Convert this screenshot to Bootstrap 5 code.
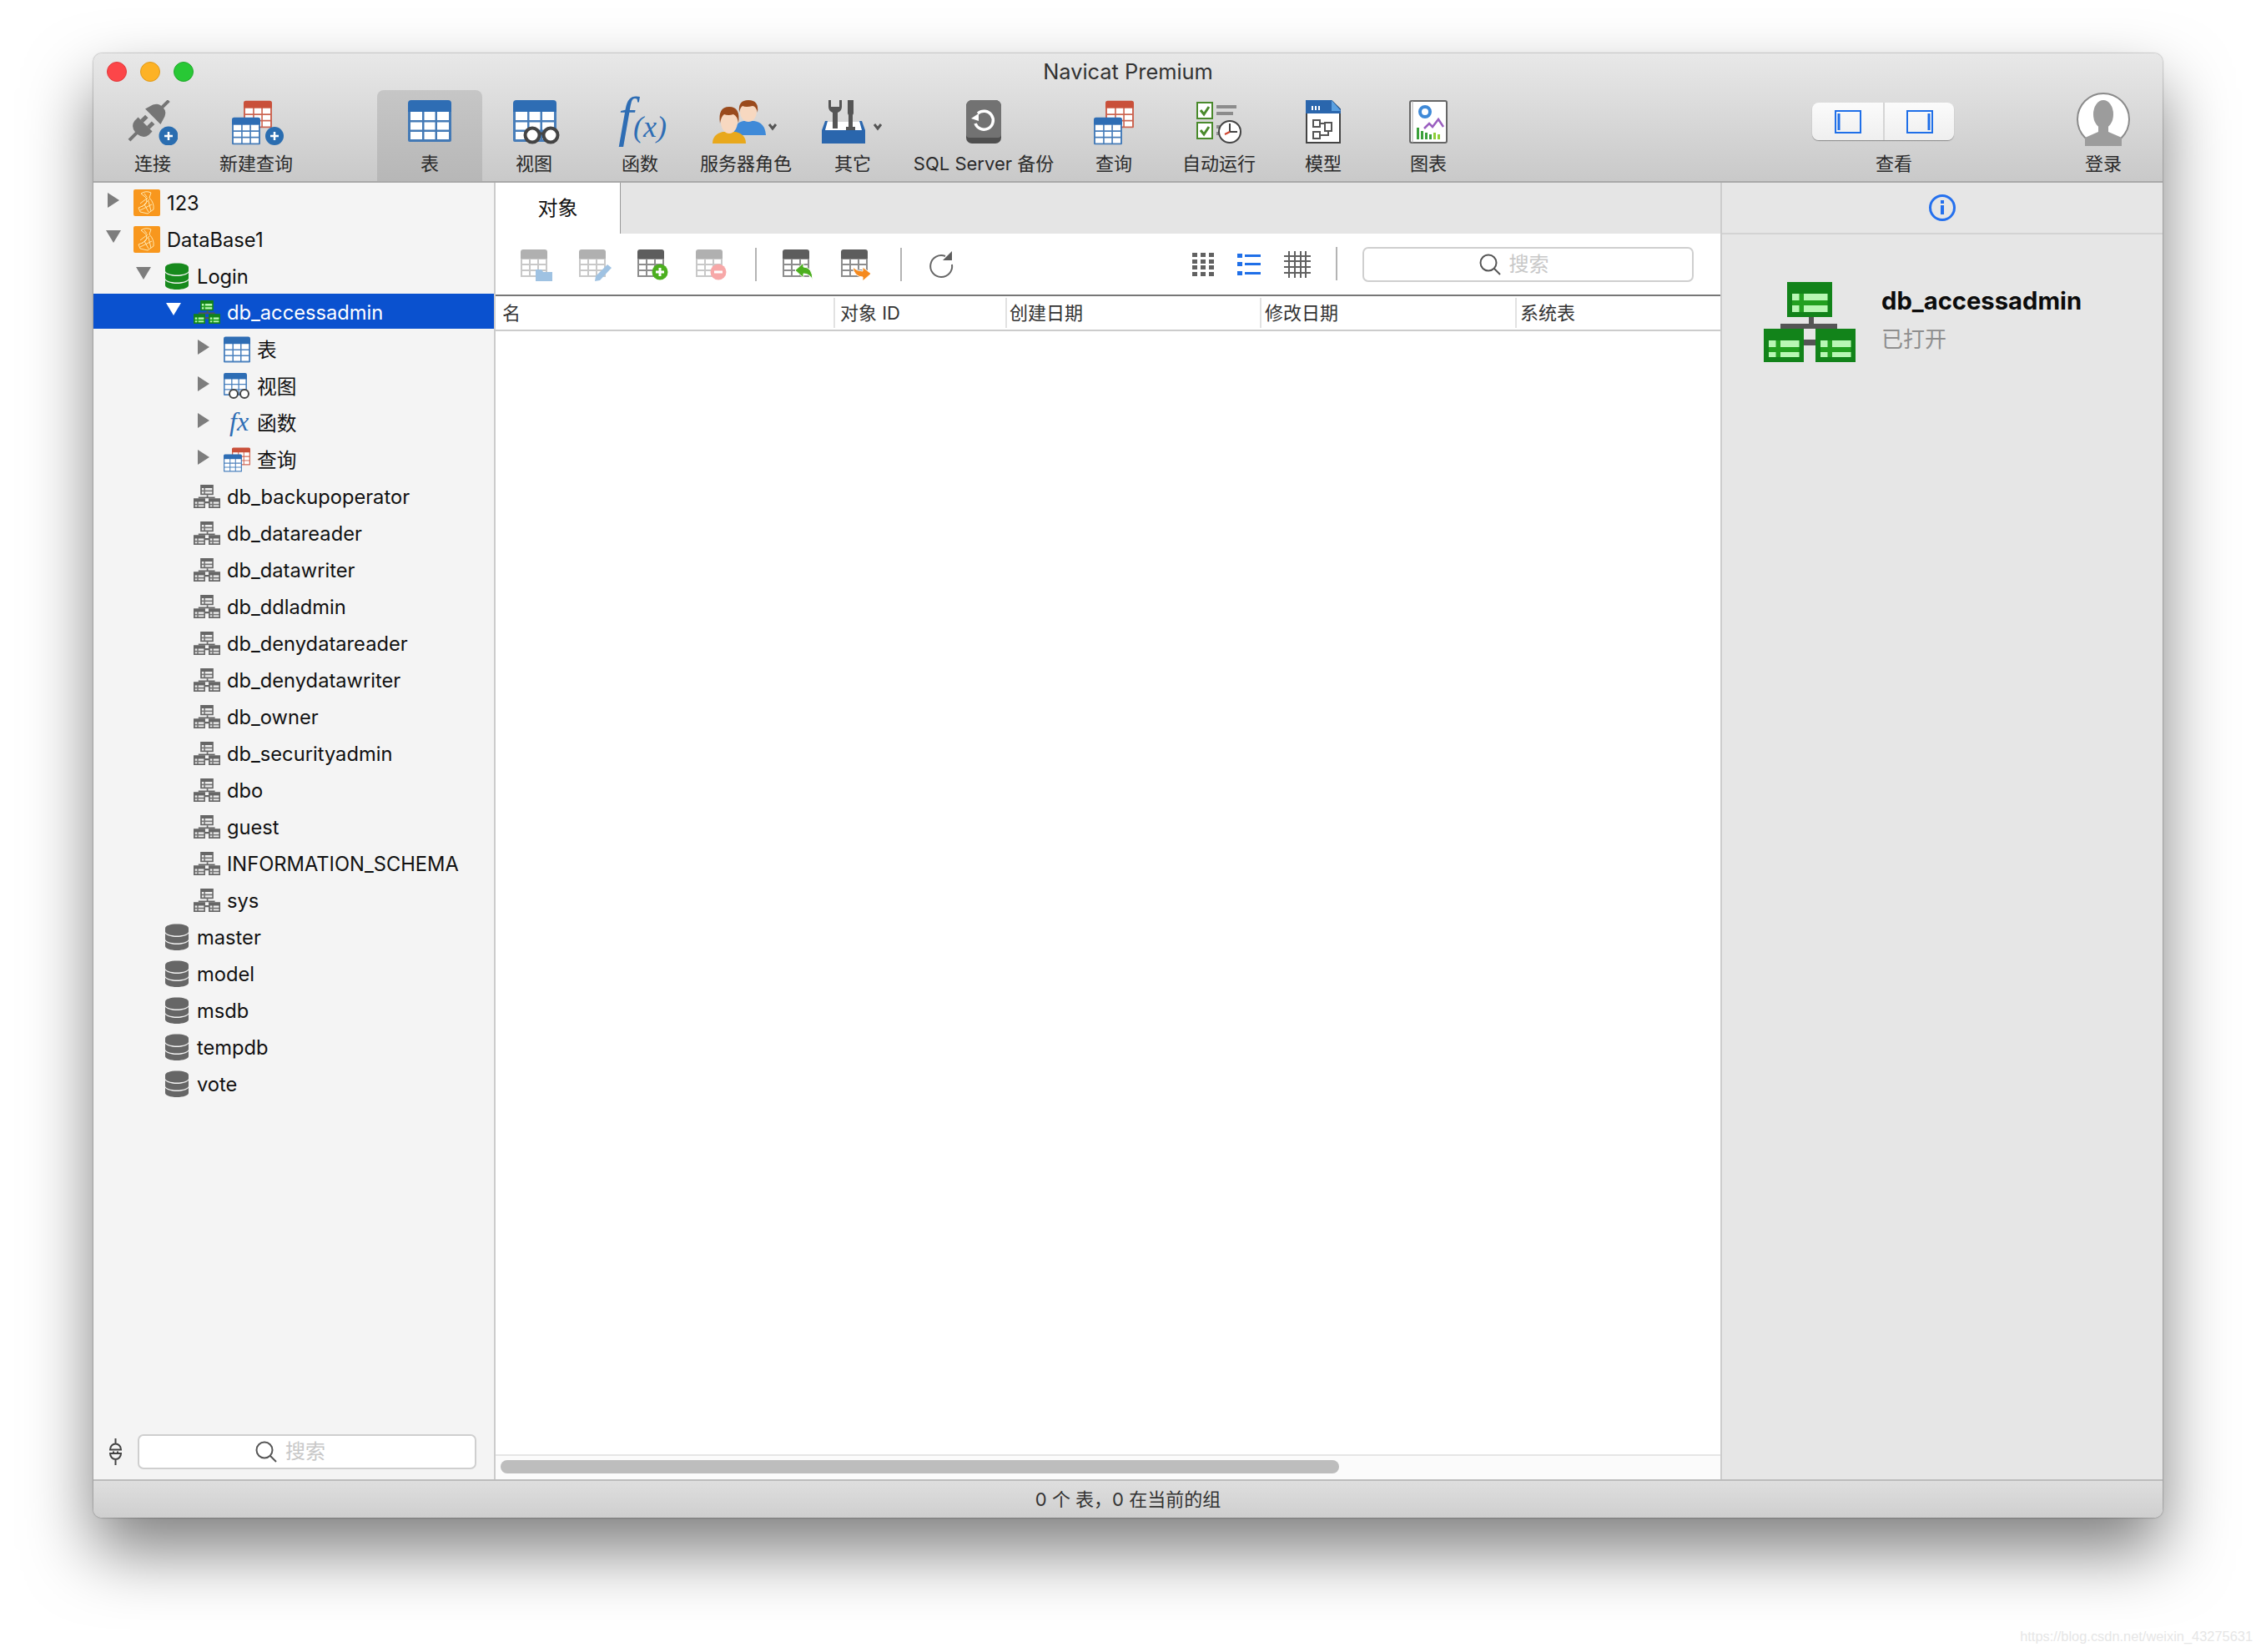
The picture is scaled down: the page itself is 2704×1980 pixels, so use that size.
<!DOCTYPE html>
<html lang="zh">

<head>
    <meta charset="UTF-8">
    <title>Navicat Premium</title>
    <link href="https://cdn.jsdelivr.net/npm/bootstrap@5.3.3/dist/css/bootstrap.min.css" rel="stylesheet">
    <style>
        body { width: 2704px; height: 1980px; overflow: hidden; background: #fff; padding: 64px 112px 0 112px; font-family: Inter, "Noto Sans CJK SC", sans-serif; color: #111; }
        .app-win { width: 2480px; height: 1755px; border-radius: 10px; overflow: hidden; box-shadow: 0 0 2px rgba(0,0,0,.55), 0 40px 80px rgba(0,0,0,.5); }
        .title-area { height: 155px; background: linear-gradient(#e8e8e8, #c9c9c9); border-bottom: 2px solid #a9a9a9; }
        .title-row { height: 44px; display: grid; grid-template-columns: 1fr auto 1fr; align-items: center; padding: 0 16px; }
        .light { width: 24px; height: 24px; border-radius: 50%; }
        .light-r { background: #fc4649; border: 1px solid #df3a3c; }
        .light-y { background: #fdb225; border: 1px solid #df9a1c; }
        .light-g { background: #28c835; border: 1px solid #22a82c; }
        .win-title { font-size: 25.4px; color: #333; line-height: 1; }
        .tool-row { height: 109px; padding-left: 8px; }
        .tool { height: 109px; flex: none; }
        .tool-ic { height: 68px; padding-top: 12px; }
        .tool-lb { height: 40px; line-height: 40px; font-size: 22px; color: #2a2a2a; white-space: nowrap; }
        .tool-on { background: linear-gradient(#c6c6c6, #b7b7b7); border-radius: 8px 8px 0 0; }
        .tw-126 { width: 126px; } .tw-122 { width: 122px; } .tw-124 { width: 124px; } .tw-130 { width: 130px; }
        .tw-132 { width: 132px; } .tw-182 { width: 182px; } .tw-128 { width: 128px; } .tw-180 { width: 180px; }
        .tw-100 { width: 100px; }
        .after-gap { margin-left: 84px; }
        .login-gap { margin-left: 111px; margin-right: 21px; }
        .seg-wrap { width: 170px; height: 45px; margin: 3px 0 0 -26px; background: linear-gradient(#fbfbfb, #efefef); border-radius: 8px; box-shadow: 0 1px 1px rgba(0,0,0,.35); }
        .seg-half { width: 85px; }
        .seg-half + .seg-half { border-left: 2px solid #d5d5d5; }
        .avatar-shift { height: 74px; margin-top: -6px; padding-top: 9px; }
        .fx-big { margin-top: -20px; }

        .body-row { height: 1554px; }
        .side-pane { width: 482px; background: #f4f4f4; border-right: 2px solid #ccc; flex: none; }
        .tree-list { margin: 0; padding: 1px 0 0 0; list-style: none; }
        .tree-row { height: 44px; display: flex; align-items: center; padding-top: 3px; font-size: 23.7px; color: #111; }
        .tree-on { background: #0a51cf; color: #fff; height: 42px; margin-bottom: 2px; }
        .lv-0 { padding-left: 17px; } .lv-1 { padding-left: 53px; } .lv-2 { padding-left: 89px; } .lv-3 { padding-left: 125px; }
        .twisty { width: 14px; height: 18px; flex: none; margin-right: 17px; position: relative; top: -4px; }
        .tw-right::after { content: ""; display: block; border-style: solid; border-width: 9px 0 9px 14px; border-color: transparent transparent transparent #7d7d7d; }
        .tw-down::after { content: ""; display: block; margin-left: -2px; margin-top: 1px; border-style: solid; border-width: 15px 9px 0 9px; border-color: #7d7d7d transparent transparent transparent; }
        .tree-on .tw-down::after { border-top-color: #fff; }
        .node-ic { width: 32px; height: 32px; flex: none; margin-right: 8px; position: relative; top: -1px; }
        .fx-small { height: 40px; margin-top: -4px; margin-bottom: -4px; }
        .db-green { color: #178a1d; } .db-grey { color: #666; }
        .grp-green { --hb: #12831a; --hl: #b8f7b4; --hm: #22a020; --hc: #555; }
        .grp-grey { --hb: #666; --hl: #eee; --hm: #777; --hc: #666; }
        .side-foot { padding: 0 21px 12px 19px; }
        .plug-mini { width: 15px; height: 32px; flex: none; margin-right: 19px; }
        .search-box { border: 2px solid #cfcfcf; border-radius: 7px; background: #fff; height: 42px; font-size: 24px; color: #c8c8c8; line-height: 1; }
        .search-box svg { width: 26px; height: 26px; margin-right: 10px; }
        .side-search { width: 406px; padding-right: 40px; }
        .obj-search { width: 397px; padding-right: 34px; }

        .main-pane { width: 1468px; background: #fff; flex: none; }
        .tab-band { height: 61px; background: #e5e5e5; flex: none; }
        .obj-tab { width: 150px; background: #fff; border-right: 1px solid #999; font-size: 24px; color: #111; line-height: 61px; text-align: center; }
        .obj-bar { height: 73px; padding: 0 32px 0 30px; flex: none; }
        .obj-left { padding-top: 3px; }
        .obj-ic { width: 40px; height: 38px; flex: none; }
        .bar-sep { width: 2px; height: 40px; background: #b4b4b4; margin: 0 1px; flex: none; position: relative; top: -1px; }
        .gap-30 { gap: 30px; }
        .gap-28 { gap: 28px; }
        .v-grid { width: 26px; height: 28px; } .v-list { width: 28px; height: 28px; } .v-hash { width: 32px; height: 32px; }
        .col-head { height: 44px; border-top: 2px solid #777; border-bottom: 2px solid #ccc; flex: none; font-size: 22px; color: #333; }
        .hd-a { width: 405px; padding-left: 8px; } .hd-b { width: 206px; padding-left: 6px; } .hd-c { width: 305px; padding-left: 3px; } .hd-d { width: 306px; padding-left: 4px; } .hd-e { width: 246px; padding-left: 4px; }
        .hd-cell { height: 36px; line-height: 36px; white-space: nowrap; }
        .hd-sep { border-left: 2px solid #e2e2e2; }
        .h-track { height: 30px; background: #fbfbfb; border-top: 2px solid #e6e6e6; padding: 5px 0 0 6px; flex: none; }
        .h-thumb { width: 1005px; height: 16px; border-radius: 8px; background: #bdbdbd; }

        .info-pane { width: 530px; background: #e6e6e6; border-left: 2px solid #ccc; flex: none; }
        .info-head { height: 62px; border-bottom: 2px solid #d3d3d3; }
        .info-ic { width: 34px; height: 34px; }
        .info-body { padding: 57px 0 0 50px; }
        .big-role { width: 110px; height: 96px; flex: none; margin-right: 31px; }
        .info-name { font-size: 29.2px; font-weight: 700; color: #0c0c0c; line-height: 36px; margin-top: 5px; }
        .info-state { font-size: 26px; color: #8e8e8e; line-height: 36px; margin-top: 10px; }

        .status-bar { height: 46px; background: linear-gradient(#dedede, #cfcfcf); border-top: 2px solid #bcbcbc; font-size: 22px; color: #333; }
        .water-mark { position: absolute; right: 4px; bottom: 6px; font-family: "Liberation Sans", sans-serif; font-size: 16.4px; color: #e6e6e6; }
    </style>
</head>

<body>
    <!-- iconos compartidos -->
    <svg class="d-none" xmlns="http://www.w3.org/2000/svg">
        <symbol id="tbl" viewBox="0 0 52 50">
            <path d="M0 14V4a4 4 0 0 1 4-4h44a4 4 0 0 1 4 4v10z" fill="currentColor"/>
            <path d="M0 13h52v35a2 2 0 0 1-2 2H2a2 2 0 0 1-2-2z" fill="currentColor" opacity=".85"/>
            <path d="M3 14h14v10H3zM19.500 14h13v10h-13zM35 14h14v10H35zM3 26.500h14v9H3zM19.500 26.500h13v9h-13zM35 26.500h14v9H35zM3 38h14v9H3zM19.500 38h13v9h-13zM35 38h14v9H35z" fill="#fff"/>
        </symbol>
        <symbol id="grp" viewBox="0 0 110 96">
            <path d="M54 42h6v8h-6zM20 50h68v6H20zM48 69h14v7H48z" fill="var(--hc)"/>
            <g fill="var(--hb)"><path d="M28 0h54v42H28zM0 56h48v40H0zM62 56h48v40H62z"/></g>
            <g fill="var(--hm)"><path d="M34 14h42.500v22H34zM6 70h36.500v20H6zM68 70h36.500v20H68z"/></g>
            <g fill="var(--hl)"><path d="M34 14h8.500v8H34zM48 14h28.500v8H48zM34 28h8.500v8H34zM48 28h28.500v8H48zM6 70h8.500v8H6zM20 70h22.500v8H20zM6 84h8.500v6H6zM20 84h22.500v6H20zM68 70h8.500v8H68zM82 70h22.500v8H82zM68 84h8.500v6H68zM82 84h22.500v6H82z"/></g>
        </symbol>
        <symbol id="dbs" viewBox="0 0 32 32">
            <path d="M2 5.500C2 2.500 8 .5 16 .5s14 2 14 5v4c0 2.800-6 5-14 5S2 12.300 2 9.500z" fill="currentColor"/>
            <path d="M2 11.800c2 2.700 7.500 4.200 14 4.200s12-1.500 14-4.200v6.700c0 2.800-6 5-14 5s-14-2.200-14-5z" fill="currentColor"/>
            <path d="M2 20.800c2 2.700 7.500 4.200 14 4.200s12-1.500 14-4.200v6.200c0 2.800-6 5-14 5S2 29.800 2 27z" fill="currentColor"/>
        </symbol>
        <symbol id="srv" viewBox="0 0 32 32">
            <rect width="32" height="32" rx="2" fill="#f8971d"/>
            <path d="M9 5q6-4 12-1l-2 6q6 6 5 14l-7 5-9-2-2-5q6-2 9-5 2-6-1-8zM17 10l-9 7M19 12l-9 9M22 18l-14 7M13 18l5 9M18 14l3 12M13 5l3 4" fill="none" stroke="#ffe8b0" stroke-width="1"/>
        </symbol>
        <symbol id="lens" viewBox="0 0 26 26">
            <circle cx="11" cy="11" r="9.500" fill="none" stroke="#555" stroke-width="2"/>
            <path d="M18 18l7 7" stroke="#555" stroke-width="2"/>
        </symbol>
        <symbol id="otb" viewBox="0 0 40 38">
            <path d="M0 11V3a3 3 0 0 1 3-3h26a3 3 0 0 1 3 3v8z" fill="currentColor"/>
            <path d="M1 11h30v21H1zM11 11v21M21 11v21M1 18h30M1 25h30" fill="none" stroke="currentColor" stroke-width="2" opacity=".7"/>
        </symbol>
        <clipPath id="avClip"><circle cx="32" cy="32" r="30"/></clipPath>
    </svg>

    <div class="app-win d-flex flex-column">
        <div class="title-area">
            <div class="title-row">
                <div class="d-flex gap-3">
                    <div class="light light-r"></div>
                    <div class="light light-y"></div>
                    <div class="light light-g"></div>
                </div>
                <div class="win-title">Navicat Premium</div>
                <div></div>
            </div>
            <div class="tool-row d-flex">
                <div class="tool tw-126 text-center">
                    <div class="tool-ic"><svg width="60" height="54" viewBox="0 0 60 54">
                        <g transform="translate(26 24) rotate(45)" fill="#757575">
                            <path d="M-13-6h26l-3-10q-3-6-7-6h-6q-4 0-7 6zM-2-22h4v-11h-4z"/>
                            <path d="M-12 7h24v6q-1 8-10 9v12h-4V22q-9-1-10-9zM-8-1h5v8h-5zM3-1h5v8H3z"/>
                        </g>
                        <circle cx="49" cy="43" r="11.500" fill="#2a6db0"/><path d="M44 43h10M49 38v10" stroke="#fff" stroke-width="2.500"/>
                    </svg></div>
                    <div class="tool-lb">连接</div>
                </div>
                <div class="tool tw-122 text-center">
                    <div class="tool-ic"><svg width="70" height="54" viewBox="-6 0 70 54">
                        <svg x="14" y="0" width="34" height="34"><use href="#tbl" color="#c9503a"/></svg>
                        <svg x="0" y="20" width="34" height="34"><use href="#tbl" color="#2e6db4"/></svg>
                        <circle cx="51" cy="43" r="11" fill="#2a6db0"/><path d="M46 43h10M51 38v10" stroke="#fff" stroke-width="2.500"/>
                    </svg></div>
                    <div class="tool-lb">新建查询</div>
                </div>
                <div class="tool tw-126 text-center tool-on after-gap">
                    <div class="tool-ic"><svg width="52" height="50"><use href="#tbl" color="#2e6db4"/></svg></div>
                    <div class="tool-lb">表</div>
                </div>
                <div class="tool tw-124 text-center">
                    <div class="tool-ic"><svg width="62" height="54" viewBox="0 0 62 54">
                        <svg x="6" width="52" height="50"><use href="#tbl" color="#2e6db4"/></svg>
                        <circle cx="29" cy="42" r="8.500" fill="#fff" stroke="#444" stroke-width="4"/>
                        <circle cx="51" cy="42" r="8.500" fill="#fff" stroke="#444" stroke-width="4"/>
                        <path d="M37 40h6" stroke="#444" stroke-width="3"/>
                    </svg></div>
                    <div class="tool-lb">视图</div>
                </div>
                <div class="tool tw-130 text-center">
                    <div class="tool-ic"><svg class="fx-big" width="70" height="80" viewBox="-4 -20 70 80">
                        <text x="5" y="42" font-family="Liberation Serif, serif" font-style="italic" font-size="66" fill="#2e6db4">f</text>
                        <text x="23" y="44" font-family="Liberation Serif, serif" font-style="italic" font-size="36" fill="#2e6db4">(x)</text>
                    </svg></div>
                    <div class="tool-lb">函数</div>
                </div>
                <div class="tool tw-124 text-center">
                    <div class="tool-ic"><svg width="80" height="54" viewBox="0 0 80 54">
                        <path d="M25 42q1-15 12-17h13q13 2 14 17z" fill="#3f8ad8"/>
                        <ellipse cx="43" cy="14" rx="10" ry="12" fill="#f7d8c0"/>
                        <path d="M32 15q-2-15 11-15t11 15q-2-8-6-8-8 2-12 0-3 2-4 8z" fill="#9a4a1c"/>
                        <path d="M0 52q0-11 12-14h16q12 3 12 14z" fill="#e8a81c"/>
                        <ellipse cx="20" cy="26" rx="10" ry="14" fill="#f7d8c0"/>
                        <path d="M9 28q-3-20 11-20t11 20q-1-9-6-11-6 2-11 0-4 3-5 11z" fill="#9a4a1c"/>
                        <path d="M68 29l4 5 4-5" fill="none" stroke="#555" stroke-width="3"/>
                    </svg></div>
                    <div class="tool-lb">服务器角色</div>
                </div>
                <div class="tool tw-132 text-center">
                    <div class="tool-ic"><svg width="74" height="54" viewBox="0 0 74 54">
                        <path d="M4 26h44l4 10H0z" fill="#fff"/>
                        <path d="M8 0v8q0 5 5 7v19h6V15q5-2 5-7V0h-3v8h-10V0z" fill="#555"/>
                        <path d="M31 0h7v16l-1 2v14h3v4H29v-4h3V18l-1-2z" fill="#555"/>
                        <path d="M0 36h52v16H0z" fill="#2a66ad"/>
                        <path d="M4 25h3l-3 11H0zM45 25h3l4 11h-4z" fill="#2a66ad"/>
                        <path d="M63 29l4 5 4-5" fill="none" stroke="#555" stroke-width="3"/>
                    </svg></div>
                    <div class="tool-lb">其它</div>
                </div>
                <div class="tool tw-182 text-center">
                    <div class="tool-ic"><svg width="42" height="52" viewBox="0 0 42 52">
                        <rect width="42" height="52" rx="7" fill="#4f4f4f"/>
                        <path d="M0 7a7 7 0 0 1 7-7h28a7 7 0 0 1 7 7v34q0 4-4 4H4q-4 0-4-4z" fill="#727272"/>
                        <path d="M14 16a11 11 0 1 1-3 12" fill="none" stroke="#fff" stroke-width="3.500"/>
                        <path d="M6 22l9-6v9z" fill="#fff"/>
                    </svg></div>
                    <div class="tool-lb">SQL Server 备份</div>
                </div>
                <div class="tool tw-130 text-center">
                    <div class="tool-ic"><svg width="48" height="54" viewBox="0 0 48 54">
                        <svg x="14" y="0" width="34" height="34"><use href="#tbl" color="#c9503a"/></svg>
                        <svg x="0" y="20" width="34" height="34"><use href="#tbl" color="#2e6db4"/></svg>
                    </svg></div>
                    <div class="tool-lb">查询</div>
                </div>
                <div class="tool tw-122 text-center">
                    <div class="tool-ic"><svg width="54" height="52" viewBox="0 0 54 52">
                        <rect x="1" y="3" width="18" height="19" fill="#fff" stroke="#4a8a2c" stroke-width="2"/>
                        <rect x="1" y="27" width="18" height="19" fill="#fff" stroke="#4a8a2c" stroke-width="2"/>
                        <path d="M5 12l4 5 6-9M5 36l4 5 6-9" fill="none" stroke="#4a8a2c" stroke-width="3"/>
                        <path d="M24 6h24v4H24zM24 14h20v4H24zM24 30h4v4h-4zM24 38h4v4h-4z" fill="#8c8c8c"/>
                        <circle cx="40" cy="38" r="13" fill="#fff" stroke="#444" stroke-width="2"/>
                        <path d="M40 28v10h9" fill="none" stroke="#444" stroke-width="2"/><path d="M40 38l-6 3" stroke="#d0452f" stroke-width="2"/>
                    </svg></div>
                    <div class="tool-lb">自动运行</div>
                </div>
                <div class="tool tw-128 text-center">
                    <div class="tool-ic"><svg width="42" height="52" viewBox="0 0 42 52">
                        <path d="M1 1h30l10 10v40H1z" fill="#fff" stroke="#444" stroke-width="2"/>
                        <path d="M0 0h31l11 11v5H0z" fill="#2a66ad"/>
                        <path d="M31 0l11 13H31z" fill="#5aa0e0"/>
                        <path d="M7 7h2v5H7zM11 7h2v5h-2zM15 7h2v5h-2z" fill="#fff"/>
                        <path d="M9 24h8v8H9zM23 27h8v10h-8zM9 38h8v8H9zM17 28h6M27 37v5H17" fill="none" stroke="#555" stroke-width="2"/>
                    </svg></div>
                    <div class="tool-lb">模型</div>
                </div>
                <div class="tool tw-124 text-center">
                    <div class="tool-ic"><svg width="46" height="52" viewBox="0 0 46 52">
                        <rect x="1" y="1" width="44" height="50" rx="2" fill="#fff" stroke="#666" stroke-width="2"/>
                        <path d="M4 1v50" stroke="#aaa" stroke-width="1"/>
                        <circle cx="19" cy="14" r="6" fill="none" stroke="#3f8ad8" stroke-width="4"/>
                        <path d="M18 34l6-6 4 4 7-9 6 9" fill="none" stroke="#9b5fc0" stroke-width="2.500"/>
                        <path d="M9 33h3v14H9zM14 37h3v10h-3zM19 39h3v8h-3zM24 41h3v6h-3z" fill="#3aa03a"/><path d="M29 39h3v8h-3zM34 41h3v6h-3z" fill="#8fcf3a"/>
                    </svg></div>
                    <div class="tool-lb">图表</div>
                </div>
                <div class="tool tw-180 text-center ms-auto">
                    <div class="tool-ic d-flex justify-content-center">
                        <div class="seg-wrap d-flex flex-shrink-0">
                            <div class="seg-half d-flex align-items-center justify-content-center"><svg width="32" height="28" viewBox="0 0 32 28"><rect x="1" y="1" width="30" height="26" fill="none" stroke="#1f6fe8" stroke-width="2"/><path d="M5 4v20" stroke="#1f6fe8" stroke-width="3"/></svg></div>
                            <div class="seg-half d-flex align-items-center justify-content-center"><svg width="32" height="28" viewBox="0 0 32 28"><rect x="1" y="1" width="30" height="26" fill="none" stroke="#1f6fe8" stroke-width="2"/><path d="M27 4v20" stroke="#1f6fe8" stroke-width="3"/></svg></div>
                        </div>
                    </div>
                    <div class="tool-lb">查看</div>
                </div>
                <div class="tool tw-100 text-center login-gap">
                    <div class="tool-ic avatar-shift"><svg width="64" height="64" viewBox="0 0 64 64">
                        <circle cx="32" cy="32" r="31" fill="#fff" stroke="#8a8a8a" stroke-width="2"/>
                        <g clip-path="url(#avClip)" fill="#9c9c9c">
                            <ellipse cx="32" cy="26" rx="12" ry="17"/>
                            <path d="M26 38h12v9l16 7v12H10V54l16-7z"/>
                        </g>
                    </svg></div>
                    <div class="tool-lb">登录</div>
                </div>
            </div>
        </div>

        <div class="body-row d-flex">
            <div class="side-pane d-flex flex-column">
                <ul class="tree-list flex-grow-1">
                    <li class="tree-row lv-0"><span class="twisty tw-right"></span><svg class="node-ic"><use href="#srv"/></svg>123</li>
                    <li class="tree-row lv-0"><span class="twisty tw-down"></span><svg class="node-ic"><use href="#srv"/></svg>DataBase1</li>
                    <li class="tree-row lv-1"><span class="twisty tw-down"></span><svg class="node-ic db-green"><use href="#dbs"/></svg>Login</li>
                    <li class="tree-row lv-2 tree-on"><span class="twisty tw-down"></span><svg class="node-ic grp-green"><use href="#grp"/></svg>db_accessadmin</li>
                    <li class="tree-row lv-3"><span class="twisty tw-right"></span><svg class="node-ic"><use href="#tbl" color="#2e6db4"/></svg>表</li>
                    <li class="tree-row lv-3"><span class="twisty tw-right"></span><svg class="node-ic" viewBox="0 0 32 32"><svg width="28" height="27"><use href="#tbl" color="#2e6db4"/></svg><circle cx="12" cy="25" r="5" fill="#fff" stroke="#444" stroke-width="2"/><circle cx="25" cy="25" r="5" fill="#fff" stroke="#444" stroke-width="2"/></svg>视图</li>
                    <li class="tree-row lv-3"><span class="twisty tw-right"></span><svg class="node-ic fx-small" viewBox="0 -4 32 40"><text x="7" y="25" font-family="Liberation Serif, serif" font-style="italic" font-size="32" fill="#2e6db4">fx</text></svg>函数</li>
                    <li class="tree-row lv-3"><span class="twisty tw-right"></span><svg class="node-ic" viewBox="0 0 32 32"><svg x="10" y="0" width="22" height="24"><use href="#tbl" color="#c9503a"/></svg><svg x="0" y="8" width="22" height="24"><use href="#tbl" color="#2e6db4"/></svg></svg>查询</li>
                    <li class="tree-row lv-2"><span class="twisty"></span><svg class="node-ic grp-grey"><use href="#grp"/></svg>db_backupoperator</li>
                    <li class="tree-row lv-2"><span class="twisty"></span><svg class="node-ic grp-grey"><use href="#grp"/></svg>db_datareader</li>
                    <li class="tree-row lv-2"><span class="twisty"></span><svg class="node-ic grp-grey"><use href="#grp"/></svg>db_datawriter</li>
                    <li class="tree-row lv-2"><span class="twisty"></span><svg class="node-ic grp-grey"><use href="#grp"/></svg>db_ddladmin</li>
                    <li class="tree-row lv-2"><span class="twisty"></span><svg class="node-ic grp-grey"><use href="#grp"/></svg>db_denydatareader</li>
                    <li class="tree-row lv-2"><span class="twisty"></span><svg class="node-ic grp-grey"><use href="#grp"/></svg>db_denydatawriter</li>
                    <li class="tree-row lv-2"><span class="twisty"></span><svg class="node-ic grp-grey"><use href="#grp"/></svg>db_owner</li>
                    <li class="tree-row lv-2"><span class="twisty"></span><svg class="node-ic grp-grey"><use href="#grp"/></svg>db_securityadmin</li>
                    <li class="tree-row lv-2"><span class="twisty"></span><svg class="node-ic grp-grey"><use href="#grp"/></svg>dbo</li>
                    <li class="tree-row lv-2"><span class="twisty"></span><svg class="node-ic grp-grey"><use href="#grp"/></svg>guest</li>
                    <li class="tree-row lv-2"><span class="twisty"></span><svg class="node-ic grp-grey"><use href="#grp"/></svg>INFORMATION_SCHEMA</li>
                    <li class="tree-row lv-2"><span class="twisty"></span><svg class="node-ic grp-grey"><use href="#grp"/></svg>sys</li>
                    <li class="tree-row lv-1"><span class="twisty"></span><svg class="node-ic db-grey"><use href="#dbs"/></svg>master</li>
                    <li class="tree-row lv-1"><span class="twisty"></span><svg class="node-ic db-grey"><use href="#dbs"/></svg>model</li>
                    <li class="tree-row lv-1"><span class="twisty"></span><svg class="node-ic db-grey"><use href="#dbs"/></svg>msdb</li>
                    <li class="tree-row lv-1"><span class="twisty"></span><svg class="node-ic db-grey"><use href="#dbs"/></svg>tempdb</li>
                    <li class="tree-row lv-1"><span class="twisty"></span><svg class="node-ic db-grey"><use href="#dbs"/></svg>vote</li>
                </ul>
                <div class="side-foot d-flex align-items-center">
                    <svg class="plug-mini" viewBox="0 0 15 32"><path d="M7.500 0v6M1 13.500a6.500 7 0 0 1 13 0zM1 18h13a6.500 7 0 0 1-13 0zM7.500 25v7M5 15.500v3M10 15.500v3" fill="none" stroke="#444" stroke-width="2"/></svg>
                    <div class="search-box side-search d-flex align-items-center justify-content-center"><svg><use href="#lens"/></svg>搜索</div>
                </div>
            </div>

            <div class="main-pane d-flex flex-column">
                <div class="tab-band d-flex"><div class="obj-tab">对象</div></div>
                <div class="obj-bar d-flex align-items-center">
                    <div class="obj-left d-flex align-items-center gap-30">
                        <svg class="obj-ic" viewBox="0 0 40 38"><use href="#otb" color="#b0b0b0"/><path d="M18 24h7l2 3h11v11H18z" fill="#9fc2e2"/></svg>
                        <svg class="obj-ic" viewBox="0 0 40 38"><use href="#otb" color="#b0b0b0"/><path d="M34 18l5 4-14 15-6 1 1-6z" fill="#9fc2e2"/></svg>
                        <svg class="obj-ic" viewBox="0 0 40 38"><use href="#otb" color="#5d5d5d"/><circle cx="27" cy="27" r="9.500" fill="#4caf1f"/><path d="M22 27h10M27 22v10" stroke="#fff" stroke-width="3"/></svg>
                        <svg class="obj-ic" viewBox="0 0 40 38"><use href="#otb" color="#b0b0b0"/><circle cx="27" cy="27" r="9.500" fill="#f7a8a8"/><path d="M22 27h10" stroke="#fff" stroke-width="3"/></svg>
                        <div class="bar-sep"></div>
                        <svg class="obj-ic" viewBox="0 0 40 38"><use href="#otb" color="#5d5d5d"/><path d="M15 25l10-9v5q11 0 11 16-3-8-11-8v5z" fill="#4caf1f" stroke="#fff" stroke-width="1"/></svg>
                        <svg class="obj-ic" viewBox="0 0 40 38"><use href="#otb" color="#5d5d5d"/><path d="M36 29l-10 9v-5q-10 0-12-12 5 5 12 5v-5z" fill="#f58a1f" stroke="#fff" stroke-width="1"/></svg>
                        <div class="bar-sep"></div>
                        <svg class="obj-ic" viewBox="5 0 40 38"><path d="M26 8a13 13 0 1 0 8 10" fill="none" stroke="#666" stroke-width="2"/><path d="M34 2v11H23z" fill="#5d5d5d"/></svg>
                    </div>
                    <div class="d-flex align-items-center ms-auto gap-30">
                        <div class="d-flex align-items-center gap-28">
                            <svg class="v-grid" viewBox="0 0 26 28"><path d="M0 0h6v5H0zM10 0h6v5h-6zM20 0h6v5h-6zM0 8h6v5H0zM10 8h6v5h-6zM20 8h6v5h-6zM0 15h6v5H0zM10 15h6v5h-6zM20 15h6v5h-6zM0 23h6v5H0zM10 23h6v5h-6zM20 23h6v5h-6z" fill="#616161"/></svg>
                            <svg class="v-list" viewBox="0 0 28 28"><path d="M0 1h6v5H0zM9 2h19v3H9zM0 11h6v5H0zM9 12h19v3H9zM0 22h6v5H0zM9 23h19v3H9z" fill="#1f6fe8"/></svg>
                            <svg class="v-hash" viewBox="0 0 32 32"><path d="M6 0v32M13 0v32M20 0v32M26 0v32M0 6h32M0 12h32M0 19h32M0 26h32" stroke="#616161" stroke-width="2" fill="none"/></svg>
                        </div>
                        <div class="bar-sep m-0"></div>
                        <div class="search-box obj-search d-flex align-items-center justify-content-center"><svg><use href="#lens"/></svg>搜索</div>
                    </div>
                </div>
                <div class="col-head d-flex align-items-center">
                    <div class="hd-cell hd-a">名</div>
                    <div class="hd-cell hd-b hd-sep">对象 ID</div>
                    <div class="hd-cell hd-c hd-sep">创建日期</div>
                    <div class="hd-cell hd-d hd-sep">修改日期</div>
                    <div class="hd-cell hd-e hd-sep">系统表</div>
                </div>
                <div class="flex-grow-1"></div>
                <div class="h-track"><div class="h-thumb"></div></div>
            </div>

            <div class="info-pane">
                <div class="info-head d-flex align-items-center justify-content-center">
                    <svg class="info-ic" viewBox="0 0 34 34"><circle cx="17" cy="17" r="14.500" fill="none" stroke="#2470ee" stroke-width="3"/><path d="M15 14h4v11h-4zM15 8h4v4h-4z" fill="#2470ee"/></svg>
                </div>
                <div class="info-body d-flex">
                    <svg class="big-role grp-green"><use href="#grp"/></svg>
                    <div>
                        <div class="info-name">db_accessadmin</div>
                        <div class="info-state">已打开</div>
                    </div>
                </div>
            </div>
        </div>

        <div class="status-bar d-flex align-items-center justify-content-center">0 个 表，0 在当前的组</div>
    </div>
    <div class="water-mark">https://blog.csdn.net/weixin_43275631</div>

    <script src="https://cdn.jsdelivr.net/npm/bootstrap@5.3.3/dist/js/bootstrap.bundle.min.js"></script>
</body>

</html>
